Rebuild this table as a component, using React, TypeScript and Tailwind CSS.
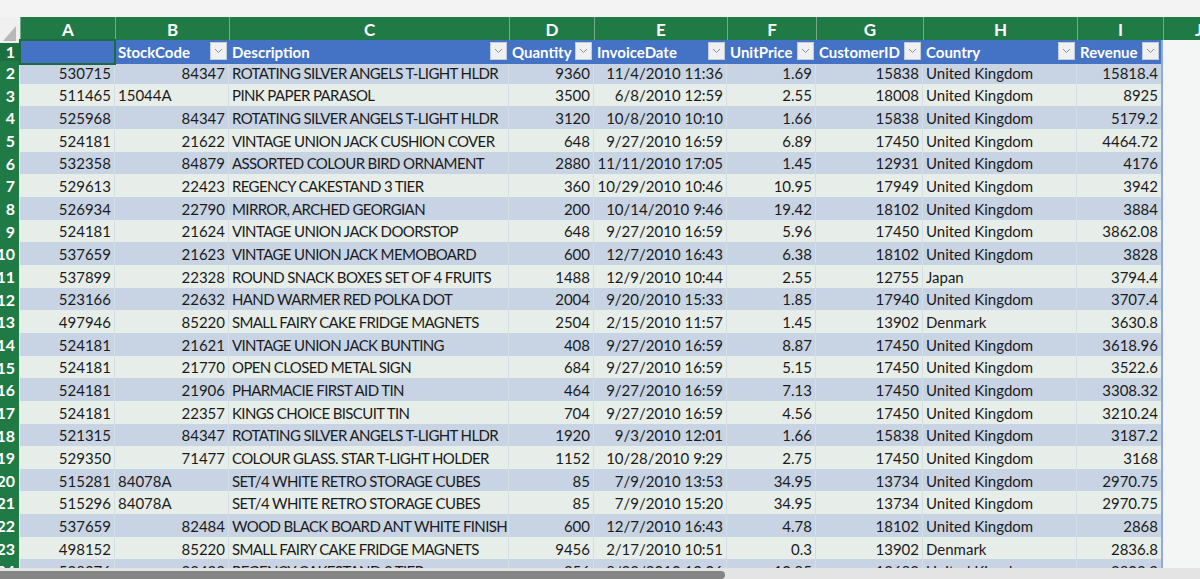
import React from 'react';

type Row = string[];

// A..I values; index 1 holds StockCode
const rows: Row[] = [
	['530715', '84347', 'ROTATING SILVER ANGELS T-LIGHT HLDR', '9360', '11/4/2010 11:36', '1.69', '15838', 'United Kingdom', '15818.4'],
	['511465', '15044A', 'PINK PAPER PARASOL', '3500', '6/8/2010 12:59', '2.55', '18008', 'United Kingdom', '8925'],
	['525968', '84347', 'ROTATING SILVER ANGELS T-LIGHT HLDR', '3120', '10/8/2010 10:10', '1.66', '15838', 'United Kingdom', '5179.2'],
	['524181', '21622', 'VINTAGE UNION JACK CUSHION COVER', '648', '9/27/2010 16:59', '6.89', '17450', 'United Kingdom', '4464.72'],
	['532358', '84879', 'ASSORTED COLOUR BIRD ORNAMENT', '2880', '11/11/2010 17:05', '1.45', '12931', 'United Kingdom', '4176'],
	['529613', '22423', 'REGENCY CAKESTAND 3 TIER', '360', '10/29/2010 10:46', '10.95', '17949', 'United Kingdom', '3942'],
	['526934', '22790', 'MIRROR, ARCHED GEORGIAN', '200', '10/14/2010 9:46', '19.42', '18102', 'United Kingdom', '3884'],
	['524181', '21624', 'VINTAGE UNION JACK DOORSTOP', '648', '9/27/2010 16:59', '5.96', '17450', 'United Kingdom', '3862.08'],
	['537659', '21623', 'VINTAGE UNION JACK MEMOBOARD', '600', '12/7/2010 16:43', '6.38', '18102', 'United Kingdom', '3828'],
	['537899', '22328', 'ROUND SNACK BOXES SET OF 4 FRUITS', '1488', '12/9/2010 10:44', '2.55', '12755', 'Japan', '3794.4'],
	['523166', '22632', 'HAND WARMER RED POLKA DOT', '2004', '9/20/2010 15:33', '1.85', '17940', 'United Kingdom', '3707.4'],
	['497946', '85220', 'SMALL FAIRY CAKE FRIDGE MAGNETS', '2504', '2/15/2010 11:57', '1.45', '13902', 'Denmark', '3630.8'],
	['524181', '21621', 'VINTAGE UNION JACK BUNTING', '408', '9/27/2010 16:59', '8.87', '17450', 'United Kingdom', '3618.96'],
	['524181', '21770', 'OPEN CLOSED METAL SIGN', '684', '9/27/2010 16:59', '5.15', '17450', 'United Kingdom', '3522.6'],
	['524181', '21906', 'PHARMACIE FIRST AID TIN', '464', '9/27/2010 16:59', '7.13', '17450', 'United Kingdom', '3308.32'],
	['524181', '22357', 'KINGS CHOICE BISCUIT TIN', '704', '9/27/2010 16:59', '4.56', '17450', 'United Kingdom', '3210.24'],
	['521315', '84347', 'ROTATING SILVER ANGELS T-LIGHT HLDR', '1920', '9/3/2010 12:01', '1.66', '15838', 'United Kingdom', '3187.2'],
	['529350', '71477', 'COLOUR GLASS. STAR T-LIGHT HOLDER', '1152', '10/28/2010 9:29', '2.75', '17450', 'United Kingdom', '3168'],
	['515281', '84078A', 'SET/4 WHITE RETRO STORAGE CUBES', '85', '7/9/2010 13:53', '34.95', '13734', 'United Kingdom', '2970.75'],
	['515296', '84078A', 'SET/4 WHITE RETRO STORAGE CUBES', '85', '7/9/2010 15:20', '34.95', '13734', 'United Kingdom', '2970.75'],
	['537659', '82484', 'WOOD BLACK BOARD ANT WHITE FINISH', '600', '12/7/2010 16:43', '4.78', '18102', 'United Kingdom', '2868'],
	['498152', '85220', 'SMALL FAIRY CAKE FRIDGE MAGNETS', '9456', '2/17/2010 10:51', '0.3', '13902', 'Denmark', '2836.8'],
	['528376', '22423', 'REGENCY CAKESTAND 3 TIER', '256', '8/23/2010 10:06', '10.95', '12682', 'United Kingdom', '2803.2'],
];

const letters = ['A', 'B', 'C', 'D', 'E', 'F', 'G', 'H', 'I'];
const headers = ['', 'StockCode', 'Description', 'Quantity', 'InvoiceDate', 'UnitPrice', 'CustomerID', 'Country', 'Revenue'];

// 열 너비 (행번호, A..I, J)
const cols = 'grid grid-cols-[20px_95px_114px_280px_85px_133px_89px_107px_154px_86px_1fr]';

function FilterButton() {
	return (
		<div className="absolute right-[2px] top-[2px] w-[17px] h-[18px] bg-[#eef0f1] border border-[#c5ccd6] flex items-center justify-center">
			<svg width="9" height="6" viewBox="0 0 9 6" fill="none">
				<path d="M1 1l3.5 3.5L8 1" stroke="#8a8f96" strokeWidth="1" />
			</svg>
		</div>
	);
}

function isText(v: string) {
	return /[A-Za-z]/.test(v) && !/^\d+$/.test(v);
}

export default function App() {
	return (
		<div
			className="w-[1200px] h-[579px] flex flex-col overflow-hidden bg-[#f3f3f3] text-[#1b1b1b]"
			style={{ fontFamily: 'Lato, "Open Sans", sans-serif' }}
		>
			{/* 상단 여백 */}
			<div className="h-[17px] shrink-0 bg-[#f3f3f3]" />

			{/* 시트 */}
			<div className="flex-1 overflow-hidden">
				{/* 열 머리글 */}
				<div className={`${cols} h-[21px]`}>
					<div className="relative bg-[#f0f0f0] overflow-hidden">
						<div className="absolute right-[4px] bottom-[2px] w-0 h-0 border-l-[13px] border-l-transparent border-b-[15px] border-b-[#b8b8b8]" />
					</div>
					{letters.map((l) => (
						<div
							key={l}
							className="bg-[#1f7a45] border-l border-[#74a98a] flex items-center justify-center text-white font-bold text-[17px]"
						>
							{l}
						</div>
					))}
					<div className="bg-[#1f7a45] border-l border-[#74a98a] flex items-center pl-[31px] text-white font-bold text-[17px]">
						J
					</div>
				</div>

				{/* 1행: 표 머리글 */}
				<div className={`${cols} h-[23px] border-t-2 border-[#e8eeea]`}>
					<div className="bg-[#1c6f3f] border-r border-[#dfe8e2] flex items-center justify-end pr-[4px] text-white font-bold text-[16px]">
						1
					</div>
					{headers.map((h, i) => (
						<div
							key={i}
							className={`relative bg-[#4472c4] text-white font-bold text-[15px] flex items-center pl-[3px] ${
								i === 0 ? 'outline-2 outline-[#1d6b3d] -outline-offset-1 z-10' : ''
							} ${i === 8 ? 'border-r-2 border-[#8eaadb]' : ''}`}
						>
							{h}
							{i > 0 && <FilterButton />}
						</div>
					))}
					<div className="bg-[#f3f6f4] border-b border-[#dce3de]" />
				</div>

				{/* 데이터 행 */}
				{rows.map((r, ri) => {
					const dark = ri % 2 === 0;
					return (
						<div key={ri} className={`${cols} h-[22.67px]`}>
							<div className="bg-[#1f7a45] border-r border-[#dfe8e2] border-b border-b-[#4f9467] flex items-center justify-end pr-[4px] text-white font-bold text-[16px] whitespace-nowrap overflow-visible">
								{ri + 2}
							</div>
							{r.map((v, ci) => (
								<div
									key={ci}
									className={`${dark ? 'bg-[#c8d4e3]' : 'bg-[#e7eeea]'} border-b border-[#a8bad3] ${
										ci < 8 ? 'border-r border-r-[#d5dde6]' : 'border-r-2 border-r-[#8eaadb]'
									} flex items-center px-[3px] text-[15px] whitespace-nowrap overflow-hidden ${
										isText(v) ? 'justify-start' : 'justify-end'
									} ${ci === 2 ? 'tracking-[-0.62px]' : ''}`}
								>
									{v}
								</div>
							))}
							<div className="bg-[#f3f6f4] border-b border-[#dce3de]" />
						</div>
					);
				})}
			</div>

			{/* 가로 스크롤바 */}
			<div className="h-[11px] shrink-0 bg-[#e4e4e4] pt-[3px]">
				<div className="w-[725px] h-[8px] bg-[#858585] rounded-r-full" />
			</div>
		</div>
	);
}
